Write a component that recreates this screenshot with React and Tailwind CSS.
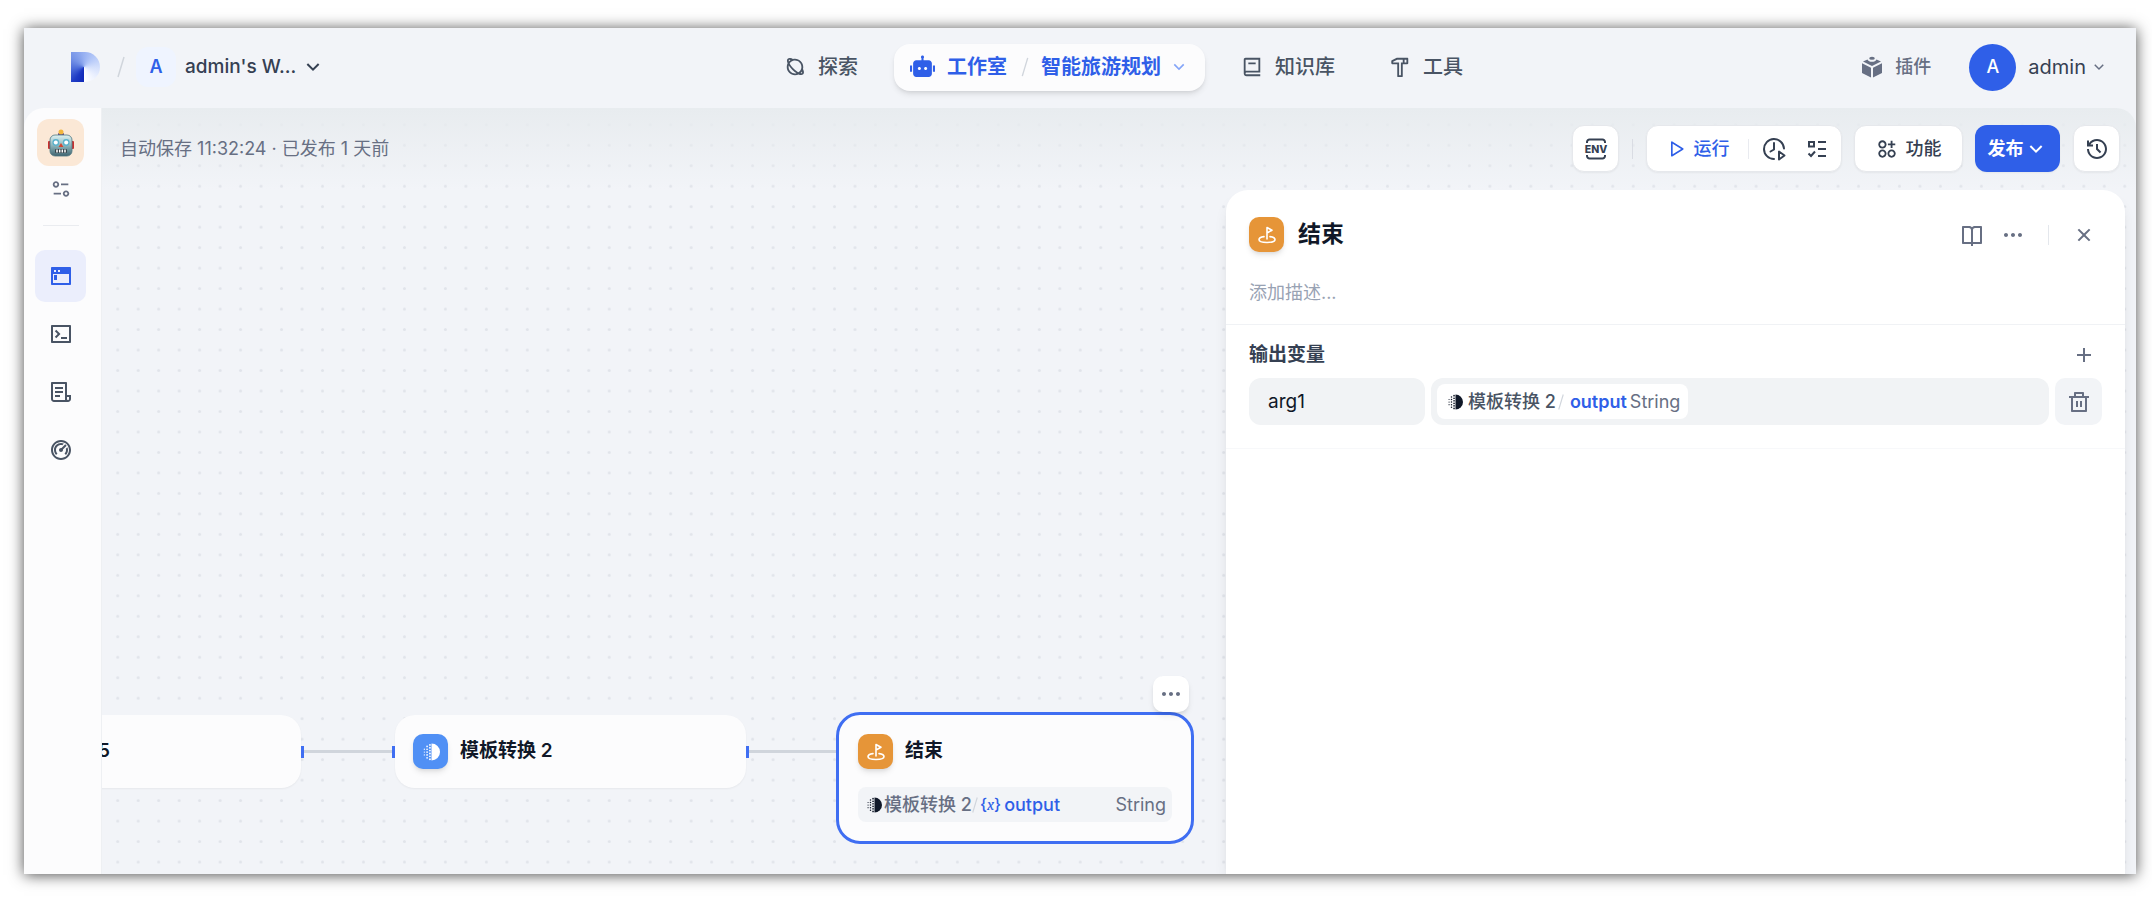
import React, { useState } from 'react'
import {
  RiAddLine,
  RiApps2AddLine,
  RiArrowDownSLine,
  RiBook2Line,
  RiBookOpenLine,
  RiCloseLine,
  RiDashboard2Line,
  RiDeleteBinLine,
  RiEqualizer2Line,
  RiFileList3Line,
  RiHammerLine,
  RiHistoryLine,
  RiMoreFill,
  RiPlanetLine,
  RiPlayLargeLine,
  RiRobot2Fill,
  RiTerminalBoxLine,
  RiTerminalWindowFill,
} from 'react-icons/ri'

const sideItems = [
  { key: 'orchestrate', label: '编排', icon: RiTerminalWindowFill },
  { key: 'api', label: '访问 API', icon: RiTerminalBoxLine },
  { key: 'logs', label: '日志', icon: RiFileList3Line },
  { key: 'overview', label: '监测', icon: RiDashboard2Line },
]

const toolbarBox = 'h-[47px] flex items-center justify-center rounded-xl border border-[#e6e8ec] bg-white text-[#354052] shadow-xs'

function Logo() {
  return (
    <div className="w-[29px] h-[30px] rounded-r-full bg-[conic-gradient(at_13px_15px,#98b1f2_0deg,#b3c7f8_45deg,#d3dffc_90deg,#f0f4ff_140deg,#ffffff_179deg,#1029b8_181deg,#1e3ac4_215deg,#4b6bd9_260deg,#7391e6_305deg,#98b1f2_360deg)]" />
  )
}

function RobotFace() {
  return (
    <svg className="w-[28px] h-[28px]" viewBox="0 0 28 28">
      <defs>
        <linearGradient id="face" x1="0" y1="0" x2="0" y2="1">
          <stop offset="0" stopColor="#dff3f3" />
          <stop offset="0.5" stopColor="#8db4ba" />
          <stop offset="1" stopColor="#3f6470" />
        </linearGradient>
      </defs>
      <rect x="1" y="12" width="3" height="8" rx="1" fill="#c9302f" />
      <rect x="24" y="12" width="3" height="8" rx="1" fill="#c9302f" />
      <rect x="11" y="4" width="6" height="3" rx="1" fill="#6b4c86" />
      <circle cx="14" cy="3" r="2.5" fill="#f3b63c" />
      <rect x="3" y="6" width="22" height="21" rx="5" fill="url(#face)" stroke="#4f7680" strokeWidth="0.8" />
      <circle cx="8.8" cy="13.5" r="3.4" fill="#5bb2cc" />
      <circle cx="19.2" cy="13.5" r="3.4" fill="#5bb2cc" />
      <circle cx="8.8" cy="13.5" r="2" fill="#fff" />
      <circle cx="19.2" cy="13.5" r="2" fill="#fff" />
      <path d="M14 14l2.4 4h-4.8z" fill="#d4452f" />
      <rect x="8" y="20" width="12" height="4" rx="1" fill="#34434a" />
      <path d="M10 20.5v3M12.7 20.5v3M15.3 20.5v3M18 20.5v3" stroke="#fff" strokeWidth="1.5" />
    </svg>
  )
}

function PluginIcon() {
  return (
    <svg className="w-[22px] h-[22px]" viewBox="0 0 22 22" fill="currentColor">
      <ellipse cx="11" cy="2.2" rx="2.8" ry="1.5" />
      <path d="M6.5 3.4c.6 1.5 2.4 2.3 4.5 2.3s3.9-.8 4.5-2.3L20 5.6 11 10 2 5.6z" />
      <path d="M1 7.2l9 4.5v9.8L1 17z" />
      <path d="M21 7.2l-9 4.5v9.8l9-4.500z" />
    </svg>
  )
}

function EnvIcon() {
  return (
    <svg className="w-6 h-6" viewBox="0 0 24 24" fill="none" stroke="currentColor" strokeWidth="2">
      <path d="M3 6V5a2.5 2.5 0 0 1 2.5-2.5h13A2.5 2.5 0 0 1 21 5v1M3 18v1a2.5 2.5 0 0 0 2.5 2.5h13A2.5 2.5 0 0 0 21 19v-1" />
      <text x="12" y="15.800" textAnchor="middle" fontSize="10.500" fontWeight="800" fill="currentColor" stroke="none">ENV</text>
    </svg>
  )
}

function ClockPlayIcon() {
  return (
    <svg className="w-6 h-6" viewBox="0 0 24 24" fill="none" stroke="currentColor" strokeWidth="2" strokeLinecap="round" strokeLinejoin="round">
      <path d="M22 11.5A10 10 0 1 0 12 22" />
      <path d="M12 6v6.5l-3.5 2" />
      <path d="M17 14.5v8l5.5-4z" />
    </svg>
  )
}

function ChecklistIcon() {
  return (
    <svg className="w-5 h-5" viewBox="0 0 20 20" fill="none" stroke="currentColor" strokeWidth="2">
      <path d="M2 3h5v4.5H2zM11 3h8M11 10h8M11 17h8M1.5 14.5l2.5 2.500 4-4.500" />
    </svg>
  )
}

function FlagIcon() {
  return (
    <svg className="w-5 h-5" viewBox="0 0 20 20" fill="none" stroke="currentColor" strokeWidth="1.6" strokeLinecap="round" strokeLinejoin="round">
      <path d="M10 14V2.5l5 2.7-5 2.8" />
      <path d="M7 11.6c-2.8.4-5 1.5-5 2.9 0 1.8 3.6 3 8 3s8-1.2 8-3c0-1.4-2.2-2.5-5-2.9" />
    </svg>
  )
}

// half disc on the right, dots fading out to the left
function TemplateIcon({ className }) {
  const dots = [
    [7.5, 1.8], [7.5, 4.5], [7.5, 7.2], [7.5, 9.9], [7.5, 12.6], [7.5, 15.3],
    [4.8, 3.2], [4.8, 5.9], [4.8, 8.6], [4.8, 11.3], [4.8, 14],
    [2.2, 5.9], [2.2, 8.6], [2.2, 11.3],
  ]
  return (
    <svg className={className} viewBox="0 0 17 17" fill="currentColor">
      <path d="M9 .5a8 8 0 0 1 0 16z" />
      {dots.map(([x, y], i) => (
        <circle key={i} cx={x} cy={y} r={x > 7 ? 0.9 : x > 4 ? 0.8 : 0.6} />
      ))}
    </svg>
  )
}

function Slash({ className }) {
  return (
    <svg className={className} viewBox="0 0 8 22" fill="none" stroke="#d0d5dc" strokeWidth="1.5">
      <path d="M7 1L1 21" />
    </svg>
  )
}

function BlockIcon({ color, children }) {
  return (
    <span className={`w-[35px] h-[35px] shrink-0 flex items-center justify-center rounded-[10px] text-white shadow-md ${color}`}>
      {children}
    </span>
  )
}

function Header() {
  return (
    <header className="h-20 shrink-0 flex items-center pb-0.5">
      <div className="w-[744px] flex items-center pl-[47px]">
        <Logo />
        <Slash className="w-2 h-[22px] ml-[17px]" />
        <button className="flex items-center ml-[11px] text-[19px] font-medium text-[#354052]">
          <span className="w-10 h-10 rounded-xl bg-[#eff4ff] text-[#2f5fe8] text-lg font-semibold flex items-center justify-center">A</span>
          <span className="ml-[9px]">admin's W...</span>
          <RiArrowDownSLine className="w-6 h-6 ml-[5px]" />
        </button>
      </div>

      <nav className="flex items-center text-xl leading-7 font-medium text-[#495464]">
        <a href="#explore" className="flex items-center gap-3 px-4">
          <RiPlanetLine className="w-[22px] h-[22px]" />
          探索
        </a>
        <div className="h-[47px] ml-5 flex items-center pl-4 pr-3 rounded-2xl bg-[#fcfcfd] text-[#2f5fe8] font-bold shadow-md">
          <a href="#studio" className="flex items-center gap-3">
            <RiRobot2Fill className="w-[25px] h-[25px]" />
            工作室
          </a>
          <Slash className="w-2 h-5 ml-3.5 mr-3" />
          <button className="flex items-center gap-1">
            智能旅游规划
            <RiArrowDownSLine className="w-5 h-5 text-[#84a5f8] mx-1" />
          </button>
        </div>
        <a href="#knowledge" className="flex items-center gap-3 px-4 ml-5">
          <RiBook2Line className="w-[22px] h-[22px]" />
          知识库
        </a>
        <a href="#tools" className="flex items-center gap-3 px-4 ml-[22px]">
          <RiHammerLine className="w-[22px] h-[22px]" />
          工具
        </a>
      </nav>

      <div className="ml-auto flex items-center pr-7">
        <a href="#plugins" className="flex items-center gap-3 text-lg font-medium text-[#676f83]">
          <PluginIcon />
          插件
        </a>
        <button className="flex items-center ml-[38px] text-xl text-[#354052]">
          <span className="w-[47px] h-[47px] rounded-full bg-[#2f5fe8] text-white text-lg font-medium flex items-center justify-center">A</span>
          <span className="ml-3">admin</span>
          <RiArrowDownSLine className="w-[18px] h-[18px] ml-1 text-[#676f83]" />
        </button>
      </div>
    </header>
  )
}

function Sidebar({ active, onChange }) {
  return (
    <aside className="w-[77px] shrink-0 flex flex-col items-center pt-[11px] pr-1 rounded-tl-[20px] bg-[#fcfcfd]">
      <div className="w-[47px] h-[47px] rounded-xl bg-[#fbe8d6] flex items-center justify-center">
        <RobotFace />
      </div>
      <button className="mt-3 text-[#676f83]" aria-label="设置">
        <RiEqualizer2Line className="w-[22px] h-[22px]" />
      </button>
      <div className="w-9 h-px bg-[#eaecf0] mt-[25px] mb-6" />
      <nav className="flex flex-col gap-1.5">
        {sideItems.map(({ key, label, icon: Icon }) => (
          <button
            key={key}
            aria-label={label}
            onClick={() => onChange(key)}
            className={`w-[51px] h-[52px] rounded-[10px] flex items-center justify-center ${
              active === key ? 'bg-[#ebeefc] text-[#2f5fe8]' : 'text-[#495464]'
            }`}
          >
            <Icon className="w-6 h-6" />
          </button>
        ))}
      </nav>
    </aside>
  )
}

function Toolbar() {
  return (
    <div className="relative h-[82px] shrink-0 flex items-center pl-[18px] pr-4 pb-px">
      <p className="text-lg leading-6 text-[#676f83]">自动保存 11:32:24 · 已发布 1 天前</p>
      <div className="ml-auto flex items-center">
        <button className={`${toolbarBox} w-[47px]`}>
          <EnvIcon />
        </button>
        <div className="w-px h-5 bg-[#d9dce3] mx-[13px]" />
        <div className={`${toolbarBox} w-[196px] pl-1 text-lg font-medium`}>
          <button className="flex items-center gap-2 text-[#2f5fe8]">
            <RiPlayLargeLine className="w-5 h-5" />
            运行
          </button>
          <div className="w-px h-5 bg-[#e9ebf0] ml-[18px] mr-[13px]" />
          <button aria-label="运行历史">
            <ClockPlayIcon />
          </button>
          <button aria-label="检查清单" className="ml-[21px]">
            <ChecklistIcon />
          </button>
        </div>
        <button className={`${toolbarBox} w-[109px] ml-3 gap-2 text-lg font-medium`}>
          <RiApps2AddLine className="w-[22px] h-[22px]" />
          功能
        </button>
        <button className="h-[47px] w-[85px] ml-3 flex items-center justify-center rounded-xl bg-[#2f5fe8] text-white text-lg font-semibold shadow-xs">
          发布
          <RiArrowDownSLine className="w-6 h-6" />
        </button>
        <button className={`${toolbarBox} w-[47px] ml-[13px]`} aria-label="版本历史">
          <RiHistoryLine className="w-6 h-6" />
        </button>
      </div>
    </div>
  )
}

function Handle({ className }) {
  return <span className={`absolute top-[31px] w-[3px] h-3 bg-[#3f6ef2] ${className}`} />
}

function Canvas() {
  return (
    <div className="absolute inset-0 overflow-hidden">
      <svg className="absolute inset-0 w-full h-full">
        <pattern id="grid-dots" width="20.48" height="20.48" patternUnits="userSpaceOnUse" x="5.5" y="6.5">
          <circle cx="10.24" cy="10.24" r="1.5" fill="#e1e4ea" />
        </pattern>
        <rect width="100%" height="100%" fill="url(#grid-dots)" />
      </svg>
      <div className="absolute inset-x-0 top-0 h-[82px] bg-linear-to-b from-[#e8ecef] to-[#e8ecef]/0" />

      {/* edges */}
      <div className="absolute left-[202px] top-[642px] w-[88px] h-[3px] bg-[#d0d5dc]" />
      <div className="absolute left-[646px] top-[642px] w-[88px] h-[3px] bg-[#d0d5dc]" />

      {/* nodes */}
      <div className="absolute left-[-152px] top-[607px] w-[351px] h-[73px] rounded-[20px] bg-[#fcfcfd] shadow-xs flex items-center pl-[148px] text-[19px] font-semibold text-[#101828]">
        5
        <Handle className="-right-[3px]" />
      </div>
      <div className="absolute left-[293px] top-[607px] w-[351px] h-[73px] rounded-[20px] bg-[#fcfcfd] shadow-xs flex items-center gap-3 px-[18px] text-[19px] font-semibold text-[#101828]">
        <BlockIcon color="bg-[#5090f5]">
          <TemplateIcon className="w-[18px] h-[18px]" />
        </BlockIcon>
        模板转换 2
        <Handle className="-left-[3px]" />
        <Handle className="-right-[3px]" />
      </div>
      <div className="absolute left-[734px] top-[604px] w-[358px] h-[132px] rounded-3xl border-3 border-[#3f6ef2] bg-[#fcfcfd] px-[19px] pt-[19px]">
        <div className="flex items-center gap-3 text-[19px] font-semibold text-[#101828]">
          <BlockIcon color="bg-[#e69538]">
            <FlagIcon />
          </BlockIcon>
          结束
        </div>
        <div className="mt-[18px] h-[35px] flex items-center rounded-lg bg-[#f2f4f7] pl-2 pr-1.5 text-lg text-[#676f83]">
          <TemplateIcon className="w-4 h-4 text-[#101828]" />
          <span className="ml-0.5 font-medium">模板转换 2</span>
          <Slash className="w-1.5 h-[18px]" />
          <span className="ml-0.5 text-base font-medium text-[#2f5fe8]">
            {'{'}<i className="font-serif">x</i>{'}'}
          </span>
          <span className="ml-[3px] font-medium text-[#2f5fe8]">output</span>
          <span className="ml-auto">String</span>
        </div>
      </div>
      <button
        aria-label="更多"
        className="absolute left-[1051px] top-[568px] w-9 h-9 rounded-[10px] bg-white shadow-md flex items-center justify-center text-[#676f83]"
      >
        <RiMoreFill className="w-6 h-6" />
      </button>
    </div>
  )
}

function NodePanel() {
  const [name, setName] = useState('arg1')
  const [desc, setDesc] = useState('')

  return (
    <section className="relative w-[899px] ml-auto mr-[11px] flex-1 rounded-t-[22px] bg-white shadow-lg">
      <div className="border-b border-[#f0f2f5] px-[23px] pt-[27px] pb-4">
        <div className="flex items-center">
          <BlockIcon color="bg-[#e69538]">
            <FlagIcon />
          </BlockIcon>
          <h2 className="ml-3.5 text-[23px] leading-[35px] font-bold text-[#101828]">结束</h2>
          <div className="ml-auto mr-1.5 flex items-center text-[#676f83]">
            <button aria-label="帮助文档">
              <RiBookOpenLine className="w-6 h-6" />
            </button>
            <button aria-label="更多" className="ml-[17px]">
              <RiMoreFill className="w-6 h-6" />
            </button>
            <div className="w-px h-5 bg-[#e4e7ec] mx-[23px]" />
            <button aria-label="关闭">
              <RiCloseLine className="w-6 h-6" />
            </button>
          </div>
        </div>
        <input
          aria-label="描述"
          placeholder="添加描述..."
          value={desc}
          onChange={e => setDesc(e.target.value)}
          className="mt-6 block w-full h-8 text-lg text-[#354052] placeholder:text-[#98a2b3] focus:outline-none"
        />
      </div>

      <div className="border-b border-[#f7f8fa] px-[23px] pt-4 pb-[23px]">
        <div className="flex items-center justify-between mb-[9px]">
          <h3 className="text-[19px] leading-7 font-semibold text-[#354052]">输出变量</h3>
          <button aria-label="添加变量" className="mr-1.5 text-[#676f83]">
            <RiAddLine className="w-6 h-6" />
          </button>
        </div>
        <div className="flex items-center gap-1.5">
          <input
            aria-label="变量名"
            value={name}
            onChange={e => setName(e.target.value)}
            className="w-[176px] h-[47px] rounded-xl bg-[#f1f3f5] px-[19px] text-[19px] text-[#101828] focus:outline-none"
          />
          <button className="flex-1 h-[47px] flex items-center rounded-xl bg-[#f1f3f5] px-1.5">
            <span className="h-[35px] flex items-center rounded-lg bg-white pl-2.5 pr-2 text-lg text-[#676f83]">
              <TemplateIcon className="w-4 h-4 text-[#101828]" />
              <span className="ml-[5px] font-medium text-[#495464]">模板转换 2</span>
              <Slash className="w-1.5 h-[18px] ml-0.5" />
              <span className="ml-1.5 font-semibold text-[#2f5fe8]">output</span>
              <span className="ml-[3px]">String</span>
            </span>
          </button>
          <button aria-label="删除" className="w-[47px] h-[47px] flex items-center justify-center rounded-[10px] bg-[#f2f4f7] text-[#676f83]">
            <RiDeleteBinLine className="w-6 h-6" />
          </button>
        </div>
      </div>
    </section>
  )
}

export default function App() {
  const [active, setActive] = useState('orchestrate')

  return (
    <div className="h-screen bg-white pt-7 pb-8 pl-6 pr-4 font-['Inter','Noto_Sans_CJK_SC',sans-serif]">
      <div className="h-full flex flex-col bg-[#f2f4f8] shadow-[0_1px_14px_rgba(0,0,0,0.7)]">
        <Header />
        <div className="flex-1 min-h-0 flex">
          <Sidebar active={active} onChange={setActive} />
          <main className="relative flex-1 min-w-0 flex flex-col overflow-hidden rounded-tr-[20px] border-l border-[#eef0f3]">
            <Canvas />
            <Toolbar />
            <NodePanel />
          </main>
        </div>
      </div>
    </div>
  )
}
